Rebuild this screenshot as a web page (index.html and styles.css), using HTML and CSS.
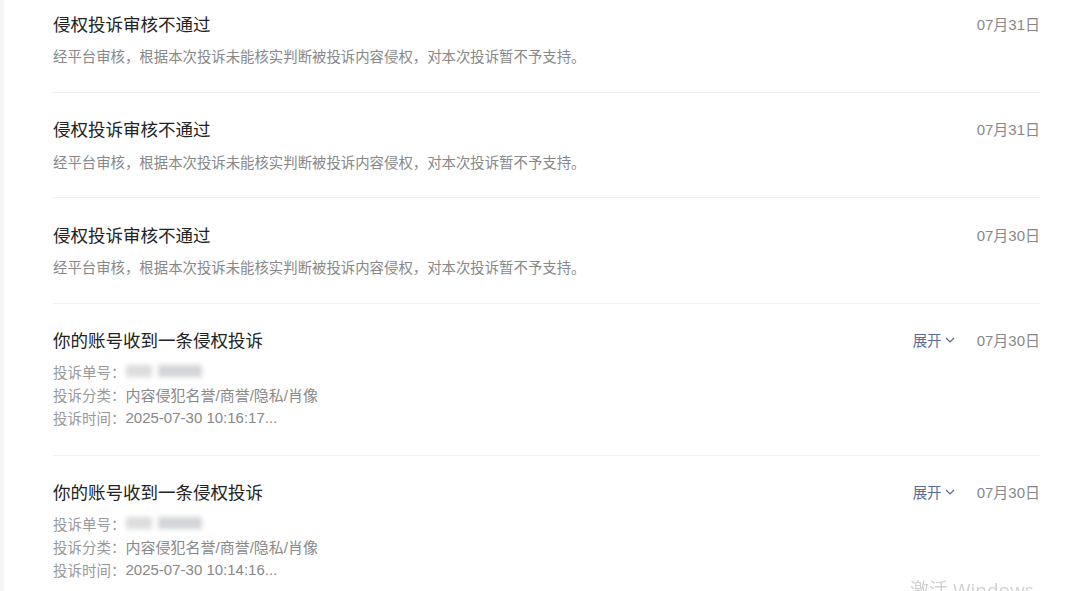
FILE: index.html
```html
<!DOCTYPE html>
<html lang="zh-CN">
<head>
    <meta charset="UTF-8">
    <title>消息通知</title>
    <link rel="stylesheet" href="styles.css">
</head>
<body>
    <div class="page">
        <div class="side"></div>
        <div class="list">
            <div class="item">
                <div class="head">
                    <span class="title">侵权投诉审核不通过</span>
                    <span class="date">07月31日</span>
                </div>
                <p class="desc">经平台审核，根据本次投诉未能核实判断被投诉内容侵权，对本次投诉暂不予支持。</p>
            </div>
            <div class="item">
                <div class="head">
                    <span class="title">侵权投诉审核不通过</span>
                    <span class="date">07月31日</span>
                </div>
                <p class="desc">经平台审核，根据本次投诉未能核实判断被投诉内容侵权，对本次投诉暂不予支持。</p>
            </div>
            <div class="item">
                <div class="head">
                    <span class="title">侵权投诉审核不通过</span>
                    <span class="date">07月30日</span>
                </div>
                <p class="desc">经平台审核，根据本次投诉未能核实判断被投诉内容侵权，对本次投诉暂不予支持。</p>
            </div>
            <div class="item detail">
                <div class="head">
                    <span class="title">你的账号收到一条侵权投诉</span>
                    <span class="more">展开<svg width="10" height="6" viewBox="0 0 10 6"><path d="M1 1l4 4 4-4" fill="none" stroke="#576b95" stroke-width="1.2"/></svg></span>
                    <span class="date">07月30日</span>
                </div>
                <div class="info">
                    <div>投诉单号：<span class="blur"><i></i><i class="b2"></i></span></div>
                    <div>投诉分类：<span class="val">内容侵犯名誉/商誉/隐私/肖像</span></div>
                    <div>投诉时间：<span class="val">2025-07-30 10:16:17...</span></div>
                </div>
            </div>
            <div class="item detail">
                <div class="head">
                    <span class="title">你的账号收到一条侵权投诉</span>
                    <span class="more">展开<svg width="10" height="6" viewBox="0 0 10 6"><path d="M1 1l4 4 4-4" fill="none" stroke="#576b95" stroke-width="1.2"/></svg></span>
                    <span class="date">07月30日</span>
                </div>
                <div class="info">
                    <div>投诉单号：<span class="blur"><i></i><i class="b2"></i></span></div>
                    <div>投诉分类：<span class="val">内容侵犯名誉/商誉/隐私/肖像</span></div>
                    <div>投诉时间：<span class="val">2025-07-30 10:14:16...</span></div>
                </div>
            </div>
        </div>
    </div>
    <div class="watermark">激活 Windows</div>
</body>
</html>
```

FILE: styles.css
```css
body {
    margin: 0;
    padding: 0;
    background: #fff;
    font-family: "Noto Sans CJK SC", "Liberation Sans", sans-serif;
    overflow: hidden;
}
.page {
    display: flex;
    height: 591px;
}
.side {
    width: 4px;
    background: #f4f5f7;
    flex-shrink: 0;
}
.list {
    flex: 1;
    padding: 0 40px 0 49px;
    margin-top: -13px;
}
.item {
    padding: 24px 0 24.5px;
    border-bottom: 1px solid #f0f0f0;
}
.item.detail {
    padding-bottom: 26px;
}
.head {
    display: flex;
    align-items: center;
    height: 24px;
}
.title {
    flex: 1;
    font-size: 17.5px;
    color: #222;
}
.date {
    font-size: 15px;
    color: #888;
    font-family: "Liberation Sans", "Noto Sans CJK SC", sans-serif;
}
.more {
    display: flex;
    align-items: center;
    gap: 3px;
    font-size: 14.5px;
    color: #576b95;
    margin-right: 22px;
}
.desc {
    margin: 9px 0 0;
    font-size: 14.4px;
    line-height: 23px;
    color: #888;
}
.info {
    margin-top: 8px;
    font-size: 14.5px;
    color: #999;
}
.info div {
    display: flex;
    align-items: center;
    height: 23px;
}
.info .val {
    color: #888;
    font-family: "Liberation Sans", "Noto Sans CJK SC", sans-serif;
    font-size: 15px;
}
.blur {
    display: flex;
    gap: 6px;
    filter: blur(2.5px);
}
.blur i {
    display: block;
    width: 26px;
    height: 12px;
    background: #dcdcdc;
}
.blur .b2 {
    width: 44px;
    background: #d4d5d8;
}
.watermark {
    position: fixed;
    left: 910px;
    top: 575px;
    font-size: 19px;
    color: #d2d2d2;
    font-family: "Open Sans", "Noto Sans CJK SC", sans-serif;
}
```
